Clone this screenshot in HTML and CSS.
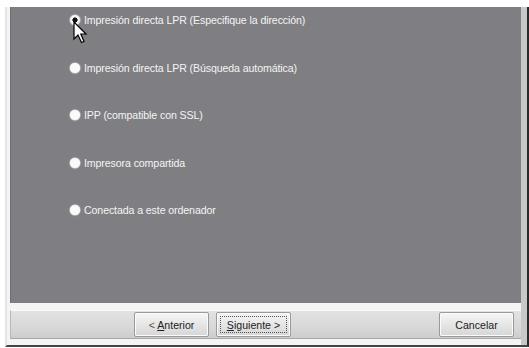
FILE: index.html
```html
<!DOCTYPE html>
<html>
<head>
<meta charset="utf-8">
<link rel="stylesheet" href="styles.css">
</head>
<body>
<div class="window">
  <div class="frame">
    <div class="panel">
      <ul class="options">
        <li class="opt selected"><span class="radio"></span><span class="label">Impresión directa LPR (Especifique la dirección)</span></li>
        <li class="opt"><span class="radio"></span><span class="label">Impresión directa LPR (Búsqueda automática)</span></li>
        <li class="opt"><span class="radio"></span><span class="label">IPP (compatible con SSL)</span></li>
        <li class="opt"><span class="radio"></span><span class="label">Impresora compartida</span></li>
        <li class="opt"><span class="radio"></span><span class="label">Conectada a este ordenador</span></li>
      </ul>
      <svg class="cursor" width="15" height="25" viewBox="0 0 15 25">
        <path d="M1 1 L1 18 L5 14 L8.5 21.5 L11 20.5 L7.8 13 L13 13 Z" fill="#fff" stroke="#000" stroke-width="1.2" stroke-linejoin="miter"/>
      </svg>
    </div>
    <div class="footer">
      <div class="nav">
        <button class="btn"><span class="lt">&lt;</span> <u>A</u>nterior</button>
        <button class="btn focus"><span class="in"><u>S</u>iguiente &gt;</span></button>
      </div>
      <button class="btn">Cancelar</button>
    </div>
  </div>
</div>
</body>
</html>
```
FILE: styles.css
```css
html, body {
  margin: 0;
  padding: 0;
  background: #fff;
  width: 529px;
  height: 348px;
  overflow: hidden;
  font-family: Tahoma, "DejaVu Sans", "Liberation Sans", sans-serif;
}
.window {
  width: 529px;
  height: 348px;
  padding: 7px 0 0 5px;
  box-sizing: border-box;
}
.frame {
  width: 524px;
  height: 340px;
  box-sizing: border-box;
  border-left: 2px solid #e6e6e6;
  border-right: 2px solid #2a2a2a;
  border-bottom: 2px solid #444;
  padding-left: 3px;
  display: flex;
  flex-direction: column;
  background: #f4f4f4;
  box-shadow: inset -6px 0 0 #c8c8c8;
}
.panel {
  position: relative;
  height: 296px;
  flex: none;
  background: #7f7f83;
  border-left: 1px solid #6e6e72;
  margin-right: 6px;
}
.options {
  list-style: none;
  margin: 0;
  padding: 6px 0 0 59px;
  display: flex;
  flex-direction: column;
  gap: 33.5px;
}
.opt {
  display: flex;
  align-items: center;
  height: 14px;
  color: #f4f4f4;
  font-family: "Liberation Sans", Arial, sans-serif;
  font-size: 10.6px;
  letter-spacing: -0.1px;
}
.radio {
  width: 10px;
  height: 10px;
  border-radius: 50%;
  background: #fafafa;
  box-shadow: 0 0 1px 0.5px #e4e4e4;
  margin-right: 4px;
  box-sizing: border-box;
}
.selected .radio {
  background: radial-gradient(circle, #111 0 2.3px, #f6f6f6 2.9px);
}
.cursor {
  position: absolute;
  left: 62px;
  top: 14px;
}
.footer {
  margin-top: 7px;
  height: 29px;
  margin-right: 6px;
  border-top: 1px solid #fafafa;
  border-left: 1px solid #b8b8b8;
  border-bottom: 1px solid #a8a8a8;
  background: linear-gradient(#e2e2e2, #d8d8d8 60%, #cdcdcd);
  display: flex;
  align-items: flex-end;
  justify-content: space-between;
  padding: 0 7px 0 123px;
  box-sizing: border-box;
}
.nav {
  display: flex;
  gap: 7px;
}
.btn {
  height: 25px;
  width: 75px;
  margin-bottom: 1px;
  font-family: "Liberation Sans", Arial, sans-serif;
  font-size: 10.6px;
  color: #222;
  background: linear-gradient(#f6f6f6, #e6e6e6 50%, #d6d6d6);
  border: 1px solid #9a9a9a;
  border-radius: 2px;
  padding: 0;
  box-shadow: inset 0 0 0 1px #fbfbfb;
}
.btn.focus {
  padding: 3px;
}
.btn .in {
  display: flex;
  align-items: center;
  justify-content: center;
  height: 100%;
  border: 1px dotted #555;
  box-sizing: border-box;
}
.lt {
  color: #555;
}
```
